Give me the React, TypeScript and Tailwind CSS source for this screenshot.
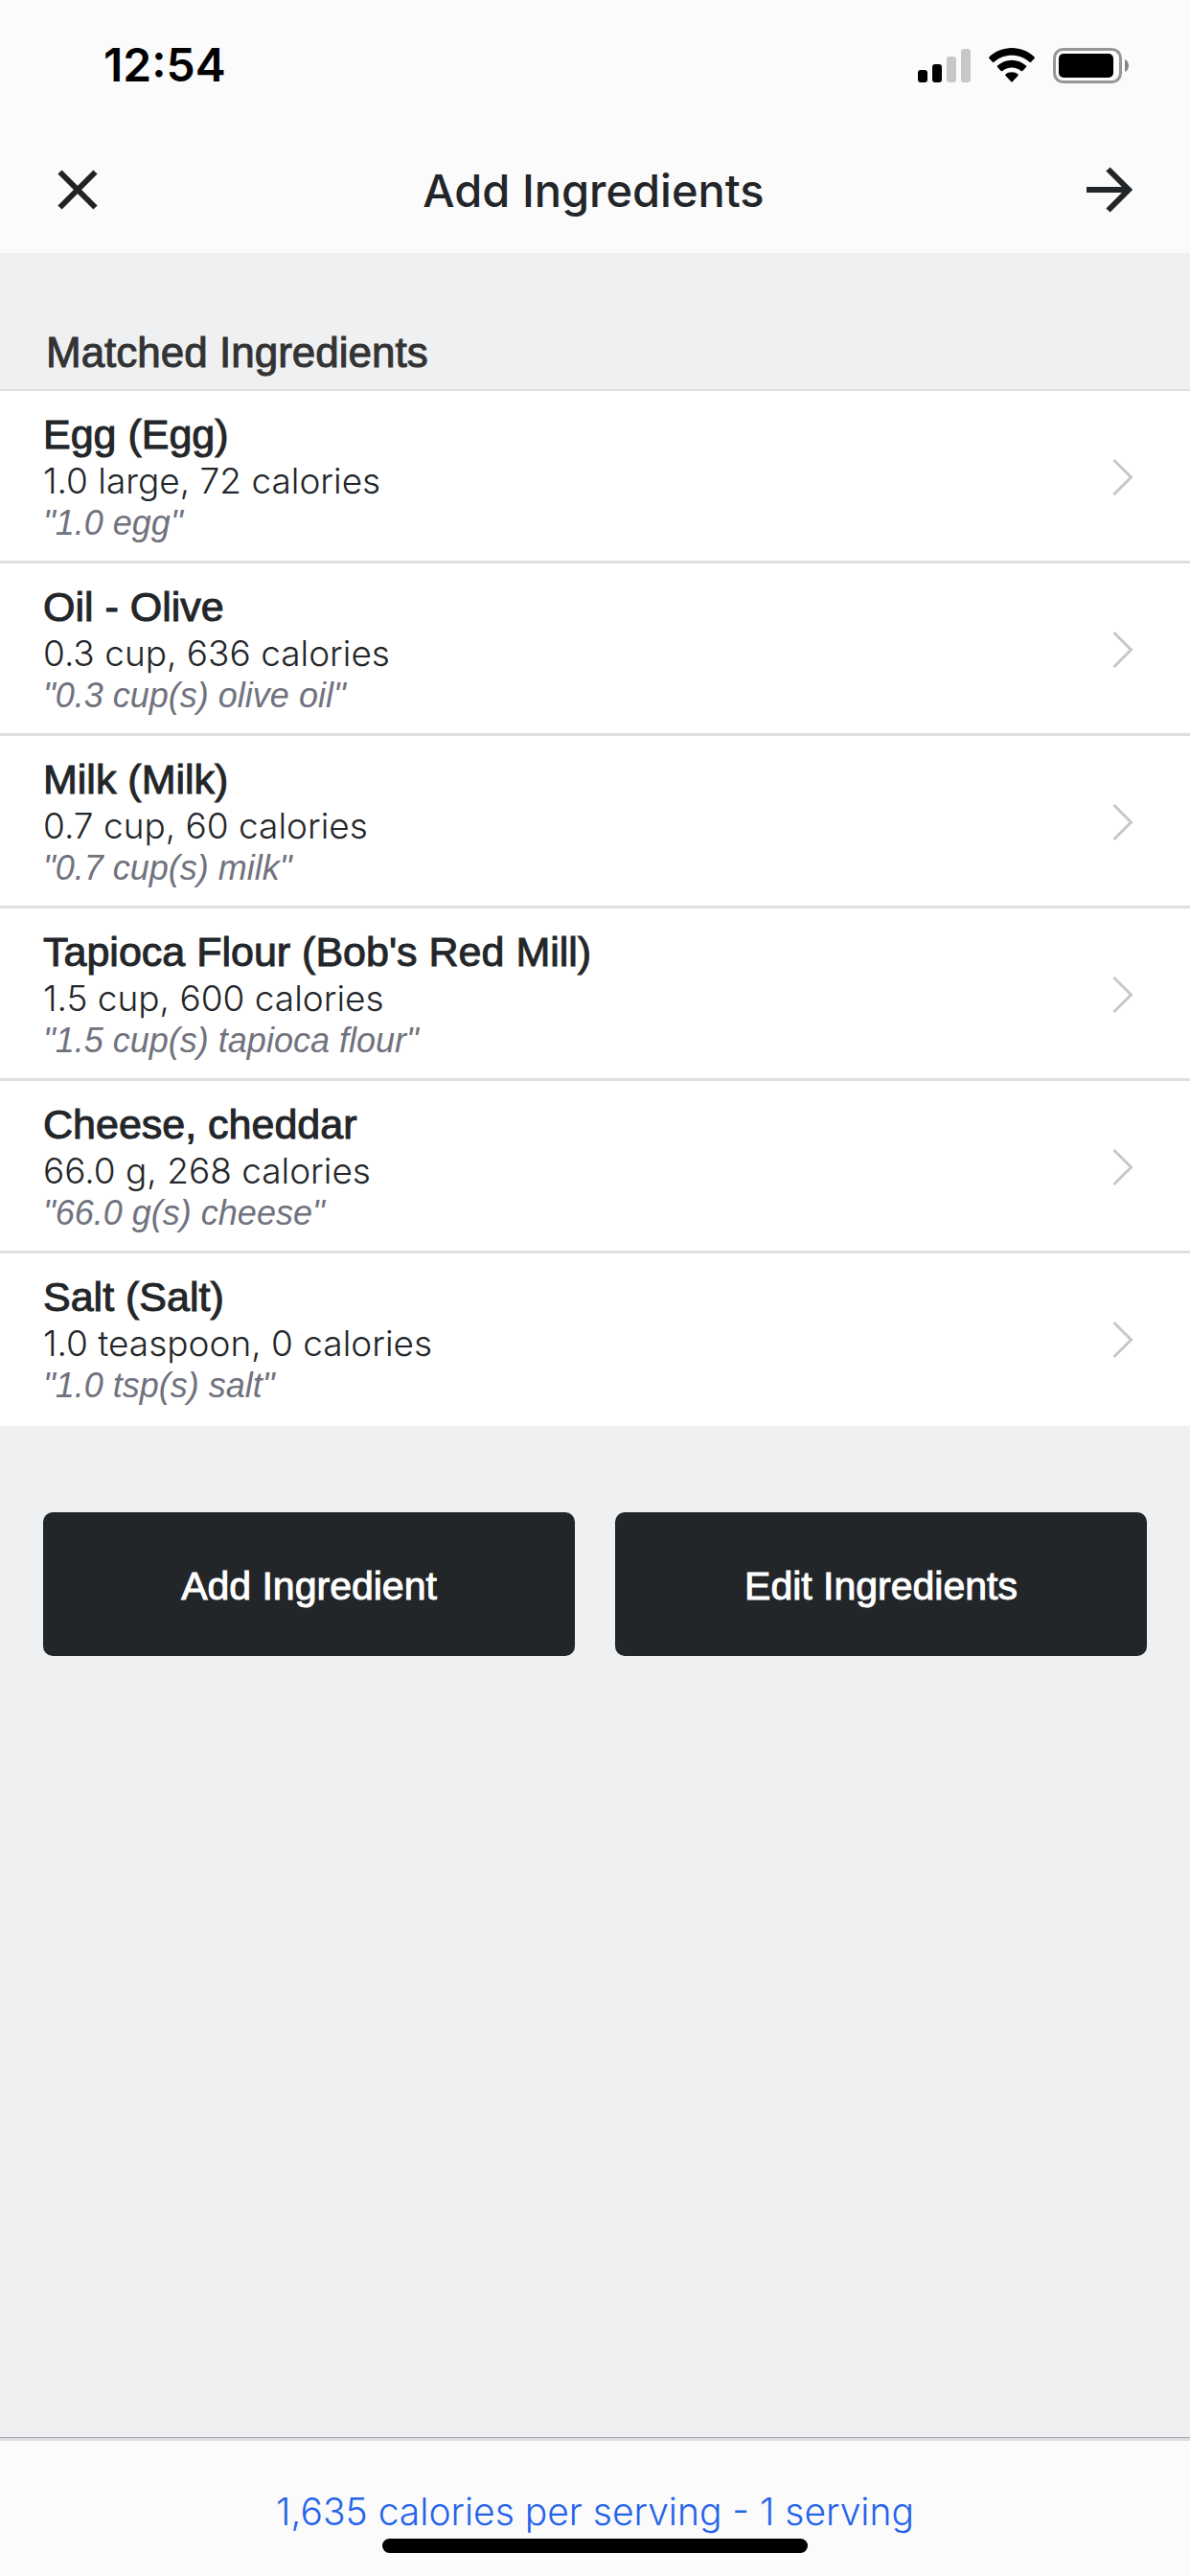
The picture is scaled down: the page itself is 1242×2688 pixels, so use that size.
import clsx from 'clsx';

type Ingredient = {
  name: string;
  amount: string;
  source: string;
};

const ingredients: Ingredient[] = [
  { name: 'Egg (Egg)', amount: '1.0 large, 72 calories', source: '1.0 egg' },
  { name: 'Oil - Olive', amount: '0.3 cup, 636 calories', source: '0.3 cup(s) olive oil' },
  { name: 'Milk (Milk)', amount: '0.7 cup, 60 calories', source: '0.7 cup(s) milk' },
  {
    name: "Tapioca Flour (Bob's Red Mill)",
    amount: '1.5 cup, 600 calories',
    source: '1.5 cup(s) tapioca flour',
  },
  { name: 'Cheese, cheddar', amount: '66.0 g, 268 calories', source: '66.0 g(s) cheese' },
  { name: 'Salt (Salt)', amount: '1.0 teaspoon, 0 calories', source: '1.0 tsp(s) salt' },
];

const helvetica = "font-['Liberation_Sans',Arial,sans-serif]";
const inter = 'font-[Inter,sans-serif]';
// Liberation Sans has no medium weight, so a thin stroke stands in for it.
const medium = '[-webkit-text-stroke:1px_currentColor]';

function SignalIcon() {
  return (
    <svg width="55" height="35" viewBox="0 0 55 35" aria-hidden="true">
      <rect x="0" y="22" width="10" height="13" rx="3" />
      <rect x="15" y="16" width="10" height="19" rx="3" />
      <rect x="30" y="8" width="10" height="27" rx="3" fill="#c8c8c8" />
      <rect x="45" y="0" width="10" height="35" rx="3" fill="#c8c8c8" />
    </svg>
  );
}

function WifiIcon() {
  return (
    <svg width="48" height="36" viewBox="0 0 48 36" aria-hidden="true">
      <path d="M24 0C33 0 41.500 3.500 47.600 9.400Q48.300 10.200 47.600 11L44 14.800Q43.300 15.500 42.500 14.800C37.500 10.300 31 7.800 24 7.800S10.500 10.300 5.500 14.800Q4.700 15.500 4 14.800L.4 11Q-.3 10.200 .4 9.400C6.500 3.500 15 0 24 0Z" />
      <path d="M24 12.800C29.700 12.800 35 15 39 18.600Q39.700 19.300 39 20L35.300 24Q34.500 24.700 33.700 24C31 21.800 27.700 20.600 24 20.600S17 21.800 14.300 24Q13.500 24.700 12.700 24L9 20Q8.300 19.300 9 18.600C13 15 18.300 12.800 24 12.800Z" />
      <path d="M24 25.300C26.500 25.300 28.700 26.100 30.500 27.600Q31.200 28.300 30.500 29L24.700 35.300Q24 36 23.300 35.300L17.500 29Q16.800 28.300 17.500 27.600C19.300 26.100 21.500 25.300 24 25.300Z" />
    </svg>
  );
}

function BatteryIcon() {
  return (
    <svg width="79" height="37" viewBox="0 0 79 37" aria-hidden="true">
      <rect x="1.500" y="1.500" width="69" height="34" rx="9" fill="none" stroke="#969696" strokeWidth="3" />
      <rect x="6" y="6" width="57" height="25" rx="5" />
      <path d="M75 12C80.300 14 80.300 23 75 25Z" fill="#858585" />
    </svg>
  );
}

function StatusBar() {
  return (
    <div className={clsx(inter, 'flex h-[132px] items-center justify-between pr-[64px] pl-[108px] text-black')}>
      <time className="pt-1 text-[48px] leading-[56px] font-semibold">12:54</time>
      <div className="flex items-center gap-[19px] pt-1">
        <SignalIcon />
        <WifiIcon />
        <BatteryIcon />
      </div>
    </div>
  );
}

function NavBar() {
  return (
    <div className="flex h-[132px] items-center justify-between pr-[45px] pl-[42px]">
      <button type="button" aria-label="Close" className="flex w-[78px] justify-center">
        <svg width="42" height="42" viewBox="0 0 42 42" fill="none" stroke="#222" strokeWidth="6">
          <path d="M2.500 2.500L39.500 39.500M39.500 2.500L2.500 39.500" />
        </svg>
      </button>
      <h1 className={clsx(inter, 'pt-[2px] text-[47px] leading-[56px] font-medium text-[#232629]')}>
        Add Ingredients
      </h1>
      <button type="button" aria-label="Next" className="flex w-[78px] justify-center">
        <svg width="48" height="48" viewBox="0 0 48 48" fill="none" stroke="#232629" strokeWidth="6">
          <path d="M0 24H44M22.500 2.500L44 24L22.500 45.500" />
        </svg>
      </button>
    </div>
  );
}

function IngredientRow({ ingredient }: { ingredient: Ingredient }) {
  return (
    <li className="group">
      <button
        type="button"
        className="flex h-[180px] w-full items-center justify-between border-b-[3px] border-[#dfdfdf] pt-[3px] pr-[59px] pl-[45px] text-left group-last:border-white"
      >
        <span className="flex flex-col pb-[3px]">
          <span className={clsx(medium, 'text-[43px] leading-[52px]')}>{ingredient.name}</span>
          <span className={clsx(inter, 'text-[37px] leading-[46px] font-light')}>{ingredient.amount}</span>
          <span className="text-[36px] leading-[42px] text-[#70727e] italic">"{ingredient.source}"</span>
        </span>
        <svg width="22" height="40" viewBox="0 0 22 40" fill="none" stroke="#c7c7cc" strokeWidth="3" aria-hidden="true">
          <path d="M1.500 2L19.500 20L1.500 38" />
        </svg>
      </button>
    </li>
  );
}

function ActionButton({ label }: { label: string }) {
  return (
    <button
      type="button"
      className={clsx(
        medium,
        'h-[150px] flex-1 rounded-[10px] bg-[#232629] pt-1 text-[41px] leading-[48px] text-white',
      )}
    >
      {label}
    </button>
  );
}

export default function App() {
  return (
    <div className={clsx(helvetica, 'flex min-h-screen flex-col bg-[#eff0f2] text-[#232629]')}>
      <header className="bg-[#fbfbfb]">
        <StatusBar />
        <NavBar />
      </header>

      <main className="flex-1">
        <h2
          className={clsx(
            medium,
            'border-b-2 border-[#dfdfdf] px-[48px] pt-[78px] pb-[12px] text-[44px] leading-[52px] text-[#333]',
          )}
        >
          Matched Ingredients
        </h2>
        <ul className="bg-white">
          {ingredients.map((ingredient) => (
            <IngredientRow key={ingredient.name} ingredient={ingredient} />
          ))}
        </ul>
        <div className="flex gap-[42px] px-[45px] pt-[90px]">
          <ActionButton label="Add Ingredient" />
          <ActionButton label="Edit Ingredients" />
        </div>
      </main>

      <footer className="border-t border-[#a7a9ab] bg-[#fbfbfb]">
        <div className="flex flex-col items-center border-t-[3px] border-[#dcdee2] pt-[45px] pb-6">
          <button type="button" className={clsx(inter, 'text-[39px] leading-[57px] font-light text-[#2563eb]')}>
            1,635 calories per serving - 1 serving
          </button>
          <div className="h-[15px] w-[444px] rounded-full bg-black" />
        </div>
      </footer>
    </div>
  );
}
